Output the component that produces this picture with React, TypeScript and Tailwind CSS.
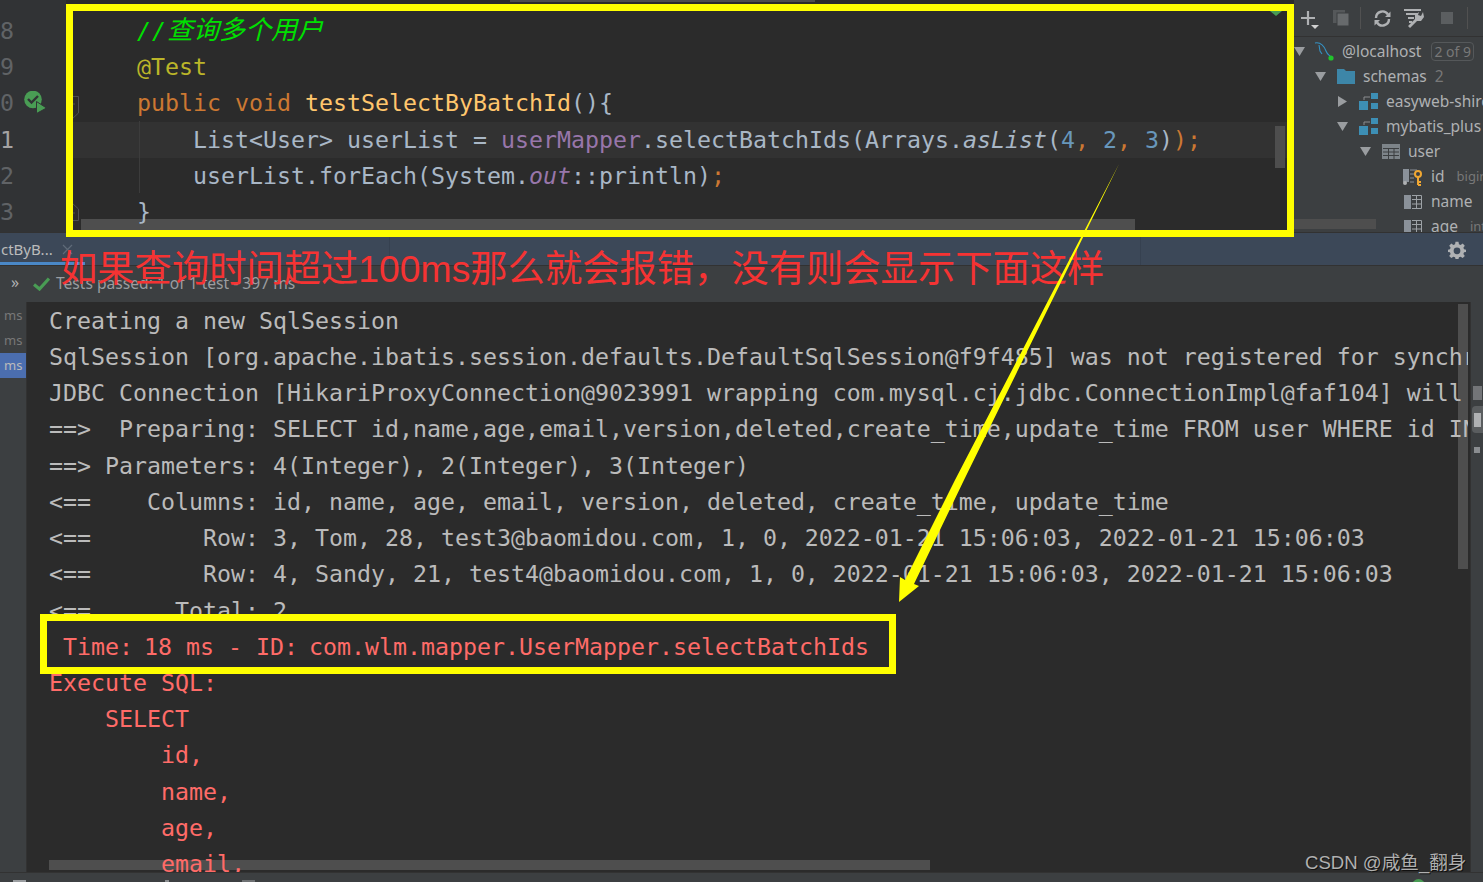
import React from "react";

const MONO = "font-['DejaVu_Sans_Mono','Liberation_Mono',monospace]";
const UI = "font-['Noto_Sans','Liberation_Sans',sans-serif]";

function Tri({ open }: { open: boolean }) {
  return (
    <svg width="11" height="11" viewBox="0 0 11 11">
      {open ? <path d="M0 1H11L5.5 10Z" fill="#9a9da0" /> : <path d="M1 0L10 5.5L1 11Z" fill="#9a9da0" />}
    </svg>
  );
}

function SchemaIcon() {
  return (
    <svg width="19" height="17" viewBox="0 0 19 17">
      <path d="M5 7V4H11" stroke="#8a8d90" fill="none" />
      <rect x="0" y="8" width="9" height="9" fill="#3d8fb5" />
      <rect x="12" y="0" width="7" height="6" fill="#3d8fb5" />
      <rect x="12" y="10" width="7" height="6" fill="#3d8fb5" />
    </svg>
  );
}

function ColIcon() {
  return (
    <svg width="18" height="14" viewBox="0 0 18 14">
      <rect x="0" y="0" width="7" height="14" fill="#8a9199" />
      <path d="M8 .5H17.5V13.5H8M8 4.5H17.5M8 9H17.5M12.5 .5V13.5" stroke="#9da2a6" fill="none" />
    </svg>
  );
}

function TreeRow({ indent, children }: { indent: string; children: React.ReactNode }) {
  return <div className={`flex items-center h-[25px] w-max whitespace-nowrap ${indent}`}>{children}</div>;
}

function CodeLine({ children, active = false }: { children?: React.ReactNode; active?: boolean }) {
  return (
    <div className={`relative h-[36.4px] leading-[36.4px] whitespace-pre pl-[71px] ${active ? "bg-[#323232]" : ""}`}>{children}</div>
  );
}

function GutterLine({ n, active = false, children }: { n: string; active?: boolean; children?: React.ReactNode }) {
  return (
    <div className="h-[36.4px] leading-[36.4px] relative">
      <span className={active ? "text-[#a4a3a3]" : "text-[#606366]"}>{n}</span>
      {children}
    </div>
  );
}

function Colon() {
  return <span className="tracking-[-3px]">:</span>;
}

const consoleLines: { t: React.ReactNode; red?: boolean }[] = [
  { t: "Creating a new SqlSession" },
  { t: "SqlSession [org.apache.ibatis.session.defaults.DefaultSqlSession@f9f485] was not registered for synchronization" },
  { t: "JDBC Connection [HikariProxyConnection@9023991 wrapping com.mysql.cj.jdbc.ConnectionImpl@faf104] will not be managed" },
  { t: "==>  Preparing: SELECT id,name,age,email,version,deleted,create_time,update_time FROM user WHERE id IN ( ? , ? , ? )" },
  { t: "==> Parameters: 4(Integer), 2(Integer), 3(Integer)" },
  { t: "<==    Columns: id, name, age, email, version, deleted, create_time, update_time" },
  { t: "<==        Row: 3, Tom, 28, test3@baomidou.com, 1, 0, 2022-01-21 15:06:03, 2022-01-21 15:06:03" },
  { t: "<==        Row: 4, Sandy, 21, test4@baomidou.com, 1, 0, 2022-01-21 15:06:03, 2022-01-21 15:06:03" },
  { t: "<==      Total: 2" },
  { t: <> Time<Colon /> 18 ms - ID<Colon /> com.wlm.mapper.UserMapper.selectBatchIds</>, red: true },
  { t: "Execute SQL:", red: true },
  { t: "    SELECT", red: true },
  { t: "        id,", red: true },
  { t: "        name,", red: true },
  { t: "        age,", red: true },
  { t: "        email,", red: true },
];

export default function App() {
  return (
    <div className="relative w-[1483px] h-[882px] overflow-hidden bg-[#2b2b2b] flex flex-col">
      {/* top */}
      <div className="flex h-[232px] shrink-0">
        <div className={`w-[66px] shrink-0 bg-[#313335] pt-[12.5px] text-[23.25px] relative z-10 ${MONO}`}>
          <GutterLine n="8" />
          <GutterLine n="9" />
          <GutterLine n="0">
            <svg className="absolute left-[24px] top-[6px]" width="23" height="23" viewBox="0 0 23 23">
              <circle cx="9" cy="8.5" r="8.8" fill="#499c54" />
              <path d="M4 8L7.5 11.5L14 5" stroke="#313335" strokeWidth="2.4" fill="none" />
              <path d="M12.5 10.5L22.5 17L12.5 22.5Z" fill="#499c54" stroke="#313335" strokeWidth="1" />
            </svg>
          </GutterLine>
          <GutterLine n="1" active />
          <GutterLine n="2" />
          <GutterLine n="3" />
        </div>
        <div className={`flex-1 min-w-0 relative overflow-hidden pt-[12.5px] text-[23.25px] text-[#a9b7c6] ${MONO}`}>
          <div className="absolute left-[444px] top-0 w-[305px] h-[2px] bg-[#4e4e4e]" />
          <div className="absolute left-[15px] top-[219px] w-[1054px] h-[11px] bg-[#4e4e4e]" />
          <svg className="absolute left-[-2px] top-[96px]" width="15" height="24" viewBox="0 0 15 24">
            <path d="M.5 .5H14.5V17L7.5 23.5L.5 17Z" fill="none" stroke="#4e5052" />
            <path d="M4 8H11" stroke="#4e5052" />
          </svg>
          <svg className="absolute left-[-2px] top-[202px]" width="15" height="19" viewBox="0 0 15 19">
            <path d="M.5 18.5H14.5V7L7.5 .5L.5 7Z" fill="none" stroke="#4e5052" />
            <path d="M4 11H11" stroke="#4e5052" />
          </svg>
          <svg className="absolute right-[12px] top-[11px]" width="12" height="5" viewBox="0 0 12 5"><path d="M0 0H12L6 5Z" fill="#499c54" /></svg>
          <CodeLine>
            <span className="relative -top-[3px] text-[#00e000] italic">
              <span className="tracking-[1px]">//</span>
              <span className="text-[26px] font-['Noto_Sans_CJK_SC',sans-serif]">查询多个用户</span>
            </span>
          </CodeLine>
          <CodeLine>
            <span className="text-[#bbb529]">@Test</span>
          </CodeLine>
          <CodeLine>
            <span className="text-[#cc7832]">public void </span>
            <span className="text-[#ffc66d]">testSelectByBatchId</span>(){"{"}
          </CodeLine>
          <CodeLine active>
            {"    List<User> userList = "}
            <span className="text-[#9876aa]">userMapper</span>.selectBatchIds(Arrays.
            <span className="italic">asList</span>(<span className="text-[#6897bb]">4</span>
            <span className="text-[#cc7832]">,</span> <span className="text-[#6897bb]">2</span>
            <span className="text-[#cc7832]">,</span> <span className="text-[#6897bb]">3</span>)
            <span className="text-[#cc7832]">);</span>
          </CodeLine>
          <CodeLine>
            {"    userList.forEach(System."}
            <span className="text-[#9876aa] italic">out</span>::println)
            <span className="text-[#cc7832]">;</span>
          </CodeLine>
          <CodeLine>{"}"}</CodeLine>
          <div className="absolute left-[73px] top-[121px] w-px h-[72px] bg-[#3c3c3c]" />
          <div className="absolute right-[9px] top-[126px] w-[10px] h-[42px] bg-[#4e4e4e]" />
        </div>
        <div className={`w-[189px] shrink-0 bg-[#3c3f41] relative overflow-hidden text-[15.5px] text-[#afb1b3] ${UI}`}>
          <div className="absolute left-0 top-[219px] w-[82px] h-[10px] bg-[#4e4e4e]" />
          <div className="h-[37px] flex items-center pl-[6px] border-b border-[#323232]">
            <svg width="20" height="22" viewBox="0 0 20 22"><path d="M8 4V18M1 11H15" stroke="#afb1b3" strokeWidth="2.2" /><path d="M11 18H19L15 22Z" fill="#d0d0d0" /></svg>
            <svg className="ml-[13px]" width="16" height="16" viewBox="0 0 16 16"><rect x="0" y="0" width="12" height="13" fill="#55585a" /><rect x="4" y="3" width="12" height="13" fill="#676a6c" stroke="#3c3f41" /></svg>
            <div className="w-px h-[22px] bg-[#515151] ml-[11px]" />
            <svg className="ml-[13px]" width="17" height="17" viewBox="0 0 17 17"><path d="M2 8A6.5 6.5 0 0 1 14 4.5M15 9A6.5 6.5 0 0 1 3 12.5" stroke="#afb1b3" strokeWidth="2.4" fill="none" /><path d="M11 7H16.5V1.5ZM6 10H.5V15.5Z" fill="#afb1b3" /></svg>
            <svg className="ml-[13px]" width="21" height="20" viewBox="0 0 21 20"><path d="M0 2H17M2 6H14M4 10H10M5 14H8" stroke="#afb1b3" strokeWidth="2.2" /><path d="M19 4L17 8L14 7L15 4L11 7L11 11L4 18L6 20L13 13L17 13L20 9Z" fill="#afb1b3" /></svg>
            <div className="w-[12px] h-[12px] bg-[#5b5e60] ml-[16px]" />
            <div className="w-px h-[22px] bg-[#515151] ml-[14px]" />
          </div>
          <div className="pt-[2px] relative">
            <TreeRow indent="pl-0">
              <Tri open />
              <svg className="ml-[9px]" width="20" height="20" viewBox="0 0 20 20">
                <path d="M1 1C6 0 10 4 12 9C13 12 15 13 17 15M5 3L6 9L8 12" stroke="#3592c4" strokeWidth="1.1" fill="none" />
                <circle cx="17" cy="16" r="2.6" fill="#22c32c" />
              </svg>
              <span className="ml-[8px]">@localhost</span>
              <span className="ml-[10px] border border-[#55585a] rounded-[4px] px-[2px] h-[19px] leading-[17px] text-[14px] text-[#787878]">2 of 9</span>
            </TreeRow>
            <TreeRow indent="pl-[21px]">
              <Tri open />
              <svg className="ml-[11px]" width="18" height="15" viewBox="0 0 18 15"><path d="M0 0H7L9 2H18V15H0Z" fill="#3d86a8" /></svg>
              <span className="ml-[8px]">schemas</span>
              <span className="ml-[8px] text-[#787878]">2</span>
            </TreeRow>
            <TreeRow indent="pl-[43px]">
              <Tri open={false} />
              <span className="ml-[11px] flex"><SchemaIcon /></span>
              <span className="ml-[8px]">easyweb-shiro</span>
            </TreeRow>
            <TreeRow indent="pl-[43px]">
              <Tri open />
              <span className="ml-[11px] flex"><SchemaIcon /></span>
              <span className="ml-[8px]">mybatis_plus</span>
            </TreeRow>
            <TreeRow indent="pl-[66px]">
              <Tri open />
              <svg className="ml-[11px]" width="18" height="15" viewBox="0 0 18 15"><rect width="18" height="15" fill="#7d8489" /><path d="M1 4.5H17M1 8H17M1 11.5H17M6.5 4V15M12 4V15" stroke="#3c3f41" /></svg>
              <span className="ml-[8px]">user</span>
            </TreeRow>
            <TreeRow indent="pl-[109px]">
              <svg width="20" height="20" viewBox="0 0 20 20">
                <rect x="0" y="2" width="6" height="13" fill="#8a9199" />
                <path d="M7 3H14M7 7H12M7 11H11M7 15H11" stroke="#8a9199" />
                <circle cx="2" cy="16" r="2" fill="#afb1b3" />
                <circle cx="15" cy="7" r="3" fill="none" stroke="#f0a732" strokeWidth="2" />
                <path d="M15 9V18M15 15H18M15 18H18" stroke="#f0a732" strokeWidth="2" />
              </svg>
              <span className="ml-[8px]">id</span>
              <span className="ml-[12px] text-[13px] text-[#787878]">bigint</span>
            </TreeRow>
            <TreeRow indent="pl-[110px]">
              <ColIcon />
              <span className="ml-[9px]">name</span>
            </TreeRow>
            <TreeRow indent="pl-[110px]">
              <ColIcon />
              <span className="ml-[9px]">age</span>
              <span className="ml-[12px] text-[13px] text-[#787878]">int</span>
            </TreeRow>
          </div>
        </div>
      </div>

      {/* tab bar */}
      <div className={`h-[33px] shrink-0 bg-[#3c4858] border-t border-[#323232] flex items-center relative text-[15px] text-[#bbbbbb] ${UI}`}>
        <span className="pl-px">ctByB...</span>
        <svg className="ml-[9px]" width="11" height="11" viewBox="0 0 11 11"><path d="M1 1L10 10M10 1L1 10" stroke="#5f6a78" strokeWidth="1.2" /></svg>
        <div className="absolute left-0 bottom-0 w-[85px] h-[3px] bg-[#4a88c7]" />
        <div className="absolute left-[389px] top-0 w-px h-full bg-[#364150]" />
        <div className="absolute left-[1140px] top-0 w-px h-full bg-[#364150]" />
        <svg className="absolute right-[17px] top-[8px]" width="18" height="18" viewBox="0 0 24 24" fill="#afb1b3">
          <path d="M10 1H14L14.6 4.3L16.8 5.2L19.6 3.3L22.4 6.2L20.5 8.9L21.4 11L24 11.5V14.5L21.4 15L20.5 17.2L22.4 20L19.6 22.8L16.8 20.9L14.6 21.8L14 24H10L9.4 21.8L7.2 20.9L4.4 22.8L1.6 20L3.5 17.2L2.6 15L0 14.5V11.5L2.6 11L3.5 8.9L1.6 6.2L4.4 3.3L7.2 5.2L9.4 4.3ZM12 8.5A4.5 4.5 0 1 0 12 17.5A4.5 4.5 0 1 0 12 8.5Z" fillRule="evenodd" />
        </svg>
      </div>

      {/* test status bar */}
      <div className={`h-[37px] shrink-0 bg-[#3c3f41] border-t border-[#323232] flex items-center text-[15.6px] text-[#9a9da0] ${UI}`}>
        <span className="ml-[11px] w-[10px] text-[16px] leading-none -mt-[4px] text-[#afb1b3]">»</span>
        <svg className="ml-[12px]" width="17" height="14" viewBox="0 0 17 14"><path d="M1 7.5L6.5 12L16 1.5" stroke="#499c54" strokeWidth="3.2" fill="none" /></svg>
        <span className="ml-[6px] -mt-[1px]">Tests passed: 1 of 1 test - 397 ms</span>
      </div>

      {/* console */}
      <div className="flex flex-1 min-h-0">
        <div className={`w-[27px] shrink-0 bg-[#3c3f41] border-r border-[#323232] pt-[1px] text-[13px] text-[#787878] leading-[25px] ${UI}`}>
          <div className="h-[25px] pl-[4px]">ms</div>
          <div className="h-[25px] pl-[4px]">ms</div>
          <div className="h-[25px] pl-[4px] bg-[#4b6eaf] text-[#bbbbbb]">ms</div>
        </div>
        <div className={`flex-1 min-w-0 relative pl-[22px] pr-[2px] pt-[0.8px] text-[23.25px] ${MONO}`}>
          <div className="absolute left-[22px] bottom-[2px] w-[881px] h-[10px] bg-[#4e4e4e]" />
          <div className="absolute right-[2px] top-[2px] w-[10px] h-[265px] bg-[#4e4e4e]" />
          <div className="relative h-full overflow-hidden">
            {consoleLines.map((l, i) => (
              <div key={i} className={`h-[36.23px] leading-[36.23px] whitespace-pre ${l.red ? "text-[#ff6b68]" : "text-[#bbbbbb]"}`}>
                {l.t}
              </div>
            ))}
          </div>
        </div>
        <div className="w-[13px] shrink-0 bg-[#3c3f41] border-l border-[#323232] flex flex-col items-center pt-[84px] gap-[6px]">
          <div className="w-[9px] h-[14px] bg-[#8a8d90] opacity-70" />
          <div className="w-[11px] h-[27px] bg-[#5a5d5f] rounded-l-[4px] self-end flex items-center justify-center">
            <div className="w-[7px] h-[14px] bg-[#afb1b3]" />
          </div>
          <div className="w-[6px] h-[6px] mt-[8px] bg-[#8a8d90]" />
        </div>
      </div>
      <div className="h-[10px] shrink-0 bg-[#3c3f41] border-t border-[#323232] flex overflow-hidden">
        <div className="ml-[13px] mt-[7px] w-[13px] h-[3px] bg-[#9a9da0]" />
        <div className="ml-[139px] mt-[7px] w-[4px] h-[3px] bg-[#8a8d90]" />
        <div className="ml-[73px] mt-[7px] w-[13px] h-[3px] bg-[#6e7173]" />
        <div className="ml-[1157px] mt-[6px] w-[13px] h-[13px] rounded-full bg-[#499c54] shrink-0" />
      </div>

      {/* annotations */}
      <div className="absolute left-[66px] top-[4px] w-[1228px] h-[233px] border-[7px] border-[#ffff00]" />
      <div className="absolute left-[40px] top-[614px] w-[856px] h-[60px] border-[7px] border-[#ffff00]" />
      <div className="absolute left-[60px] top-[245px] whitespace-nowrap text-[37.3px] leading-[48px] text-[#f53333] font-['Liberation_Sans','Noto_Sans_CJK_SC',sans-serif]">
        如果查询时间超过100ms那么就会报错，没有则会显示下面这样
      </div>
      <svg className="absolute left-0 top-0 pointer-events-none" width="1483" height="882" viewBox="0 0 1483 882">
        <path d="M1119 164L955 480L905 580L900 577L899 602L919 586L914 584L964 480Z" fill="#ffff00" />
      </svg>
      <div className="absolute left-[1305px] top-[849px] text-[18.6px] leading-[28px] whitespace-nowrap text-[#b0b0b0] [text-shadow:1px_1px_0_#111111] font-['Liberation_Sans','Noto_Sans_CJK_SC',sans-serif]">
        CSDN @咸鱼_翻身
      </div>
    </div>
  );
}
